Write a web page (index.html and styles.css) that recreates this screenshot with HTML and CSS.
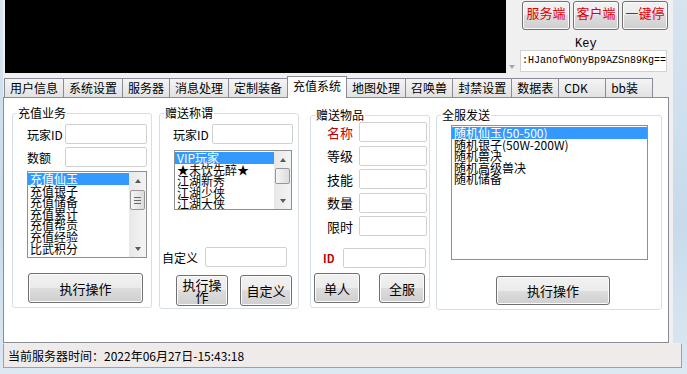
FILE: index.html
```html
<!DOCTYPE html>
<html lang="zh-CN">
  <head>
    <meta charset="UTF-8" />
    <meta name="viewport" content="width=device-width, initial-scale=1.0" />
    <title>充值系统</title>
    <link rel="stylesheet" href="styles.css">
  </head>
  <body>
    <div class="window">
      <div class="top">
        <div class="console"></div>
        <div class="console-bar"><span class="tri-down light"></span></div>
        <div class="side">
          <div class="side-buttons">
            <button class="btn btn-red w48">服务端</button>
            <button class="btn btn-red w46">客户端</button>
            <button class="btn btn-red w46">一键停</button>
          </div>
          <div class="key-label">Key</div>
          <div class="key-box">:HJanofWOnyBp9AZSn89Kg==</div>
        </div>
      </div>

      <div class="tabs">
        <div class="tab">用户信息</div>
        <div class="tab">系统设置</div>
        <div class="tab">服务器</div>
        <div class="tab">消息处理</div>
        <div class="tab">定制装备</div>
        <div class="tab active">充值系统</div>
        <div class="tab">地图处理</div>
        <div class="tab">召唤兽</div>
        <div class="tab">封禁设置</div>
        <div class="tab">数据表</div>
        <div class="tab">CDK</div>
        <div class="tab">bb装</div>
      </div>

      <div class="page">
        <!-- 充值业务 -->
        <fieldset class="group g-recharge">
          <legend>充值业务</legend>
          <div class="row r1">
            <label class="lbl w38">玩家ID</label>
            <input type="text" class="text w82" />
          </div>
          <div class="row r2">
            <label class="lbl w38">数额</label>
            <input type="text" class="text w82" />
          </div>
          <div class="listbox list-recharge">
            <ul class="items">
              <li class="selected">充值仙玉</li>
              <li>充值银子</li>
              <li>充值储备</li>
              <li>充值累计</li>
              <li>充值帮贡</li>
              <li>充值经验</li>
              <li>比武积分</li>
            </ul>
            <div class="scrollbar">
              <div class="sb-btn"><span class="tri-up"></span></div>
              <div class="sb-track"><div class="sb-thumb thumb-recharge"><span class="grip"></span></div></div>
              <div class="sb-btn"><span class="tri-down"></span></div>
            </div>
          </div>
          <button class="btn btn-exec-recharge">执行操作</button>
        </fieldset>

        <!-- 赠送称谓 -->
        <fieldset class="group g-title">
          <legend>赠送称谓</legend>
          <div class="row t1">
            <label class="lbl w39">玩家ID</label>
            <input type="text" class="text w81" />
          </div>
          <div class="listbox list-title">
            <ul class="items">
              <li class="selected">VIP玩家</li>
              <li>★未饮先醉★</li>
              <li>江湖新秀</li>
              <li>江湖少侠</li>
              <li>江湖大侠</li>
            </ul>
            <div class="scrollbar">
              <div class="sb-btn"><span class="tri-up"></span></div>
              <div class="sb-track"><div class="sb-thumb thumb-title"></div></div>
              <div class="sb-btn"><span class="tri-down"></span></div>
            </div>
          </div>
          <div class="row t2">
            <label class="lbl w43">自定义</label>
            <input type="text" class="text w82" />
          </div>
          <div class="btn-row t3">
            <button class="btn btn-wrap">执行操作</button>
            <button class="btn btn-custom">自定义</button>
          </div>
        </fieldset>

        <!-- 赠送物品 -->
        <fieldset class="group g-item">
          <legend>赠送物品</legend>
          <div class="item-rows">
            <div class="row"><label class="lbl big w32 red">名称</label><input type="text" class="text w68" /></div>
            <div class="row"><label class="lbl big w32">等级</label><input type="text" class="text w68" /></div>
            <div class="row"><label class="lbl big w32">技能</label><input type="text" class="text w68" /></div>
            <div class="row"><label class="lbl big w32">数量</label><input type="text" class="text w68" /></div>
            <div class="row"><label class="lbl big w32">限时</label><input type="text" class="text w68" /></div>
          </div>
          <div class="row i-id">
            <label class="lbl w20 red id">ID</label>
            <input type="text" class="text w83" />
          </div>
          <div class="btn-row i-btns">
            <button class="btn btn-small">单人</button>
            <button class="btn btn-small">全服</button>
          </div>
        </fieldset>

        <!-- 全服发送 -->
        <fieldset class="group g-all">
          <legend>全服发送</legend>
          <div class="listbox list-all">
            <ul class="items">
              <li class="selected">随机仙玉(50-500)</li>
              <li>随机银子(50W-200W)</li>
              <li>随机兽决</li>
              <li>随机高级兽决</li>
              <li>随机储备</li>
            </ul>
          </div>
          <button class="btn btn-exec-all">执行操作</button>
        </fieldset>
      </div>
    </div>

    <div class="status">当前服务器时间：2022年06月27日-15:43:18</div>
  </body>
</html>
```

FILE: styles.css
```css
body {
  margin: 0;
  width: 687px;
  height: 374px;
  overflow: hidden;
  background: linear-gradient(to bottom, #d6e4f0, #c8dbeb 60%, #dce8f2);
  font-family: "Noto Sans CJK SC", sans-serif;
  font-size: 12px;
  color: #000;
}
.window {
  margin-left: 3px;
  width: 670px;
  background: #f0f0f0;
}

/* top strip */
.top {
  display: flex;
  height: 78px;
}
.console {
  width: 501px;
  height: 73px;
  margin-left: 2px;
  background: #000;
}
.console-bar {
  width: 11px;
  height: 73px;
  display: flex;
  flex-direction: column;
  justify-content: flex-end;
  align-items: center;
  padding-bottom: 4px;
  box-sizing: border-box;
}
.side {
  width: 153px;
  padding-left: 5px;
  box-sizing: border-box;
}
.side-buttons {
  display: flex;
  gap: 3px;
  margin-top: 1px;
}
.btn {
  box-sizing: border-box;
  border: 1px solid #707070;
  border-radius: 3px;
  background: linear-gradient(#f2f2f2, #ebebeb 50%, #dddddd 50%, #cfcfcf);
  box-shadow: inset 0 0 0 1px #fbfbfb;
  font-family: "Noto Sans CJK SC", sans-serif;
  font-size: 13px;
  color: #000;
  padding: 0;
  cursor: pointer;
}
.btn-red {
  height: 29px;
  color: #e00000;
  padding-bottom: 5px;
  line-height: 14px;
}
.w48 { width: 48px; }
.w46 { width: 46px; }
.key-label {
  margin: 8px 0 0 53px;
  font-family: "Liberation Mono", monospace;
  font-size: 12px;
  line-height: 12px;
}
.key-box {
  margin-left: -2px;
  width: 147px;
  height: 22px;
  box-sizing: border-box;
  border: 1px solid #d2d2d2;
  background: #fff;
  font-family: "Liberation Mono", monospace;
  font-size: 10px;
  line-height: 20px;
  padding-left: 1px;
  white-space: nowrap;
  overflow: hidden;
}

/* tabs */
.tabs {
  display: flex;
  align-items: flex-end;
  height: 19px;
  padding-left: 1px;
}
.tab {
  position: relative;
  box-sizing: border-box;
  min-width: 48px;
  height: 19px;
  margin-right: -1px;
  padding: 0 5px;
  border: 1px solid #898c95;
  border-bottom: none;
  background: linear-gradient(#f4f4f4, #e2e2e2);
  line-height: 18px;
  white-space: nowrap;
}
.tab.active {
  z-index: 1;
  height: 22px;
  margin-bottom: -1px;
  background: #fff;
  line-height: 18px;
}

/* tab page */
.page {
  display: flex;
  align-items: flex-start;
  box-sizing: border-box;
  width: 666px;
  height: 246px;
  padding: 8px 0 0 8px;
  border: 1px solid #898c95;
  background: #fff;
}
.group {
  box-sizing: border-box;
  margin: 0;
  padding: 0;
  min-width: 0;
  border: 1px solid #d5dfe5;
  border-radius: 3px;
}
.group legend {
  margin-left: 4px;
  padding: 0 1px;
  font-size: 12px;
  line-height: 14px;
}
.g-recharge { width: 140px; height: 202px; margin-right: 7px; }
.g-title { width: 140px; height: 203px; margin-right: 11px; }
.g-item { width: 120px; height: 200px; margin: 2px 6px 0 0; }
.g-all { width: 226px; height: 202px; margin-top: 2px; }

.row {
  display: flex;
  align-items: center;
  height: 20px;
}
.lbl {
  font-size: 12px;
  white-space: nowrap;
}
.lbl.big { font-size: 13px; }
.red { color: #c00000; }
.id { font-size: 11px; font-weight: bold; }
.w20 { width: 20px; }
.w32 { width: 32px; }
.w38 { width: 38px; }
.w39 { width: 39px; }
.w43 { width: 43px; }
.text {
  box-sizing: border-box;
  height: 20px;
  margin: 0;
  padding: 0 2px;
  border: 1px solid #d0d0d0;
  border-radius: 2px;
  background: #fff;
  font-family: inherit;
  font-size: 12px;
}
.w68 { width: 68px; }
.w81 { width: 81px; }
.w82 { width: 82px; }
.w83 { width: 83px; }

/* listbox */
.listbox {
  display: flex;
  box-sizing: border-box;
  border: 1px solid #8e8f8f;
  background: #fff;
  overflow: hidden;
}
.items {
  flex: 1;
  margin: 0;
  padding: 1px 0 0;
  list-style: none;
  font-size: 12px;
  line-height: 11.6px;
  overflow: hidden;
}
.items li {
  padding-left: 2px;
  white-space: nowrap;
}
.items li.selected {
  background: #3399ff;
  color: #fff;
}
.scrollbar {
  width: 17px;
  display: flex;
  flex-direction: column;
  background: linear-gradient(to right, #e8e8e8, #f4f4f4);
}
.sb-btn {
  height: 17px;
  display: flex;
  align-items: center;
  justify-content: center;
}
.sb-track {
  flex: 1;
}
.sb-thumb {
  box-sizing: border-box;
  margin: 0 1px;
  border: 1px solid #979797;
  border-radius: 2px;
  background: linear-gradient(to right, #f5f5f5, #dcdcdc);
  display: flex;
  align-items: center;
  justify-content: center;
}
.thumb-recharge { height: 20px; margin-top: 1px; }
.thumb-title { height: 16px; }
.grip {
  width: 7px;
  height: 7px;
  background: repeating-linear-gradient(#6a6a6a 0 1px, transparent 1px 3px);
}
.tri-up,
.tri-down {
  width: 0;
  height: 0;
  border-left: 3px solid transparent;
  border-right: 3px solid transparent;
}
.tri-up { border-bottom: 4px solid #5a5a5a; }
.tri-down { border-top: 4px solid #5a5a5a; }
.tri-down.light { border-top-color: #a8a8a8; }

/* 充值业务 */
.g-recharge .r1 { margin: 4px 0 0 14px; }
.g-recharge .r2 { margin: 3px 0 0 14px; }
.list-recharge { width: 120px; height: 87px; margin: 4px 0 0 14px; }
.btn-exec-recharge { width: 115px; height: 30px; margin: 15px 0 0 15px; font-size: 13px; }

/* 赠送称谓 */
.g-title .t1 { margin: 4px 0 0 13px; }
.list-title { width: 118px; height: 60px; margin: 6px 0 0 14px; }
.g-title .t2 { margin: 37px 0 0 2px; }
.btn-row { display: flex; }
.t3 { margin: 8px 0 0 16px; gap: 12px; }
.btn-wrap {
  width: 52px;
  height: 31px;
  padding: 0 5px;
  line-height: 12px;
}
.btn-custom { width: 52px; height: 31px; }

/* 赠送物品 */
.item-rows {
  display: flex;
  flex-direction: column;
  gap: 3.5px;
  padding-left: 16px;
}
.i-id { margin: 12px 0 0 12px; }
.i-btns { margin: 5px 0 0 3px; gap: 19px; }
.btn-small { width: 46px; height: 30px; }

/* 全服发送 */
.list-all { width: 197px; height: 135px; margin: 3px 0 0 14px; }
.btn-exec-all { width: 114px; height: 29px; margin: 16px 0 0 59px; }

/* status bar */
.status {
  box-sizing: border-box;
  width: 679px;
  height: 25px;
  margin-left: 3px;
  padding-left: 4px;
  border: 1px solid #a0a0a0;
  border-top-color: #f0f0f0;
  background: #efebea;
  line-height: 23px;
  font-size: 12px;
}
```
